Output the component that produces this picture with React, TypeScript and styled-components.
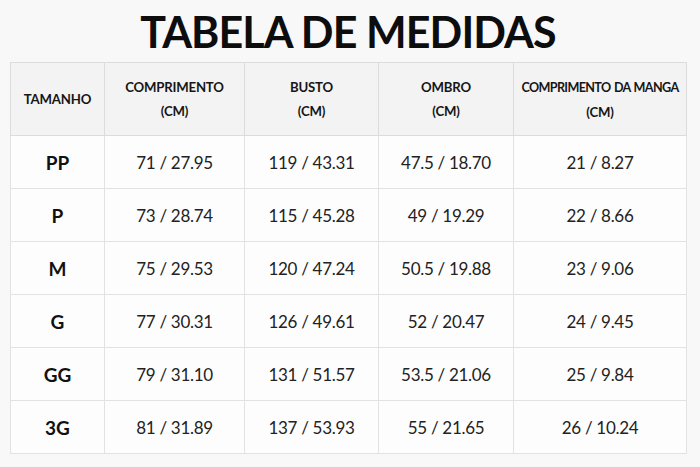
import * as React from "react";
import styled, { createGlobalStyle } from "styled-components";

const rows = [
  ["PP", "71 / 27.95", "119 / 43.31", "47.5 / 18.70", "21 / 8.27"],
  ["P", "73 / 28.74", "115 / 45.28", "49 / 19.29", "22 / 8.66"],
  ["M", "75 / 29.53", "120 / 47.24", "50.5 / 19.88", "23 / 9.06"],
  ["G", "77 / 30.31", "126 / 49.61", "52 / 20.47", "24 / 9.45"],
  ["GG", "79 / 31.10", "131 / 51.57", "53.5 / 21.06", "25 / 9.84"],
  ["3G", "81 / 31.89", "137 / 53.93", "55 / 21.65", "26 / 10.24"],
];

const columns = [
  { label: "TAMANHO", width: 94 },
  { label: "COMPRIMENTO", unit: "(CM)", width: 140 },
  { label: "BUSTO", unit: "(CM)", width: 134 },
  { label: "OMBRO", unit: "(CM)", width: 135 },
  { label: "COMPRIMENTO DA MANGA", unit: "(CM)", width: 173, compact: true },
];

export default () => {
  return (
    <>
      <GlobalStyle />
      <Page>
        <Title>TABELA DE MEDIDAS</Title>
        <Table>
          <colgroup>
            {columns.map((c) => (
              <col key={c.label} style={{ width: c.width }} />
            ))}
          </colgroup>
          <thead>
            <tr>
              {columns.map((c) => (
                <HeadCell key={c.label}>
                  <HeadLabel $compact={c.compact}>{c.label}</HeadLabel>
                  {c.unit && (
                    <>
                      <br />
                      {c.unit}
                    </>
                  )}
                </HeadCell>
              ))}
            </tr>
          </thead>
          <tbody>
            {rows.map(([size, ...values]) => (
              <tr key={size}>
                <SizeCell>{size}</SizeCell>
                {values.map((v, i) => (
                  <Cell key={i}>{v}</Cell>
                ))}
              </tr>
            ))}
          </tbody>
        </Table>
      </Page>
    </>
  );
};

const GlobalStyle = createGlobalStyle`
  body {
    margin: 0;
    background: #f8f8f8;
    font-family: Lato, "Open Sans", "Liberation Sans", sans-serif;
    color: #1c1c1c;
  }
`;

const Page = styled.div`
  width: 700px;
  padding: 10px 14px 0 10px;
  box-sizing: border-box;
`;

const Title = styled.h1`
  margin: 0 0 8px;
  text-align: center;
  font-size: 43px;
  line-height: 44px;
  font-weight: 700;
  color: #0d0d0d;
  letter-spacing: -0.9px;
`;

const Table = styled.table`
  width: 676px;
  table-layout: fixed;
  border-collapse: collapse;
  background: #fdfdfd;
  border: 1px solid #dcdcdc;
`;

const HeadCell = styled.th`
  height: 72px;
  padding: 0;
  background: #f3f3f3;
  border: 1px solid #dcdcdc;
  font-size: 13.2px;
  line-height: 24px;
  font-weight: 700;
  letter-spacing: -0.2px;
  white-space: nowrap;
  color: #161616;
  text-align: center;
  vertical-align: middle;
`;

const HeadLabel = styled.span<{ $compact?: boolean }>`
  font-size: ${(p) => (p.$compact ? "12.6px" : "inherit")};
  letter-spacing: ${(p) => (p.$compact ? "-0.65px" : "inherit")};
  word-spacing: ${(p) => (p.$compact ? "1px" : "normal")};
`;

const Cell = styled.td`
  height: 52px;
  padding: 0;
  border: 1px solid #e2e2e2;
  font-size: 17px;
  font-weight: 400;
  letter-spacing: -0.3px;
  color: #222;
  text-align: center;
  vertical-align: middle;
`;

const SizeCell = styled(Cell)`
  font-size: 19px;
  font-weight: 700;
  letter-spacing: 0;
  color: #111;
`;
